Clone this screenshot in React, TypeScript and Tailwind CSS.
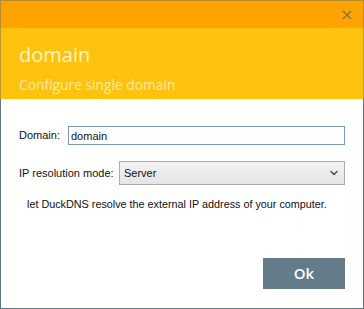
import { ChevronDown } from "lucide-react";

export default function App() {
  return (
    <div className="flex h-[309px] w-[364px] flex-col bg-white font-['Liberation_Sans',Arial,sans-serif]">
      {/* Title bar */}
      <div className="flex h-[28px] shrink-0 items-center justify-end border-x border-t border-[#b48d2e] bg-[#ffa300] pr-[11px]">
        <svg width="10" height="10" viewBox="0 0 10 10" className="text-[#8a7340]">
          <path d="M1 1 L9 9 M9 1 L1 9" stroke="currentColor" strokeWidth="1.4" />
        </svg>
      </div>

      {/* Header */}
      <div className="flex h-[71px] shrink-0 flex-col border-x border-[#bf9a2a] bg-[#ffc20e] pl-[18px] pt-[13px] font-['Open_Sans',sans-serif]">
        <h1 className="text-[20px] leading-[27px] text-[#fff4c8]">domain</h1>
        <p className="mt-[8px] text-[13.8px] leading-[18px] text-[#ffeaa6]">
          Configure single domain
        </p>
      </div>

      {/* Body */}
      <div className="flex flex-1 flex-col border-x border-b border-[#5f7785] pl-[18px] pr-[18px] pt-[27px] text-[11px] text-[#111]">
        <div className="flex items-center">
          <label className="w-[49px]">Domain:</label>
          <input
            defaultValue="domain"
            className="h-[19px] flex-1 border border-[#7a9bb4] px-[2px] text-[11px] outline-none"
          />
        </div>

        <div className="mt-[16px] flex items-center">
          <label className="w-[100px]">IP resolution mode:</label>
          <div className="flex h-[24px] flex-1 items-center justify-between border border-[#acacac] bg-gradient-to-b from-[#f2f2f2] to-[#e5e5e5] pl-[4px] pr-[4px]">
            <span>Server</span>
            <ChevronDown size={12} strokeWidth={2.5} className="text-[#444]" />
          </div>
        </div>

        <p className="mt-[11px] pl-[8px] text-[10.8px]">
          let DuckDNS resolve the external IP address of your computer.
        </p>

        <div className="mt-auto mb-[19px] flex justify-end">
          <button className="h-[31px] w-[82px] bg-[#647c8a] font-['Open_Sans',sans-serif] text-[15px] font-semibold text-white">
            Ok
          </button>
        </div>
      </div>
    </div>
  );
}
